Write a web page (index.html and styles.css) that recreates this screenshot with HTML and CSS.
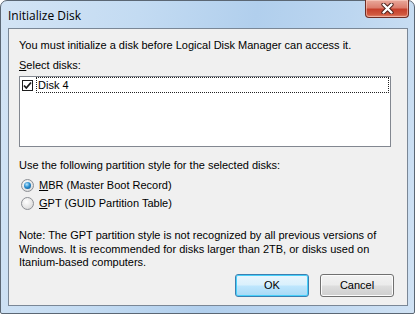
FILE: index.html
```html
<!DOCTYPE html>
<html>
<head>
<meta charset="utf-8">
<link rel="stylesheet" href="styles.css">
</head>
<body>
<div class="window">
  <div class="titlebar">
    <span class="title">Initialize Disk</span>
    <div class="close">
      <svg width="17" height="11" viewBox="0 0 17 11">
        <path d="M4.5 1.5 L12.5 9.5 M12.5 1.5 L4.5 9.5" stroke="#4a1e18" stroke-width="4.2" stroke-linecap="round"/>
        <path d="M4.5 1.5 L12.5 9.5 M12.5 1.5 L4.5 9.5" stroke="#ffffff" stroke-width="2.4" stroke-linecap="round"/>
      </svg>
    </div>
  </div>
  <div class="client">
    <p class="line intro">You must initialize a disk before Logical Disk Manager can access it.</p>
    <p class="line label"><u>S</u>elect disks:</p>
    <div class="listbox">
      <div class="item">
        <span class="check">
          <svg width="9" height="9" viewBox="0 0 9 9"><path d="M1 4.5 L3.3 7 L8 1.5" fill="none" stroke="#1a1a1a" stroke-width="1.8"/></svg>
        </span>
        <span class="item-text">Disk 4</span>
      </div>
    </div>
    <p class="line label2">Use the following partition style for the selected disks:</p>
    <div class="radios">
      <div class="radio-row"><span class="radio on"></span><span><u>M</u>BR (Master Boot Record)</span></div>
      <div class="radio-row"><span class="radio"></span><span><u>G</u>PT (GUID Partition Table)</span></div>
    </div>
    <p class="note">Note: The GPT partition style is not recognized by all previous versions of<br>Windows. It is recommended for disks larger than 2TB, or disks used on<br>Itanium-based computers.</p>
    <div class="buttons">
      <button class="btn default">OK</button>
      <button class="btn">Cancel</button>
    </div>
  </div>
</div>
</body>
</html>
```
FILE: styles.css
```css
html, body {
  margin: 0;
  padding: 0;
  background: #ffffff;
}
.window {
  width: 415px;
  height: 314px;
  box-sizing: border-box;
  border: 1px solid #5b6774;
  border-radius: 7px 7px 2px 2px;
  background: linear-gradient(100deg, #d3e4f5 0%, #c3dbf2 30%, #b1cfed 55%, #bcd6f0 75%, #d0e2f4 100%);
  padding: 0 6px 7px 7px;
  display: flex;
  flex-direction: column;
  font-family: "Liberation Sans", Arial, sans-serif;
  font-size: 11px;
  color: #000;
}
.titlebar {
  height: 27px;
  display: flex;
  justify-content: space-between;
  align-items: flex-start;
}
.title {
  font-family: "Open Sans", "Noto Sans", sans-serif;
  font-size: 12px;
  margin-top: 6px;
  color: #000;
}
.close {
  width: 44px;
  height: 18px;
  margin-top: -1px;
  margin-right: -1px;
  box-sizing: border-box;
  border: 1px solid #6e2d25;
  border-top: none;
  border-radius: 0 0 4px 4px;
  background: linear-gradient(#e9a99c 0%, #dc7e6e 45%, #c6402c 55%, #d0583f 85%, #e48a73 100%);
  box-shadow: inset 0 0 0 1px rgba(255,220,210,0.5);
  display: flex;
  align-items: center;
  justify-content: center;
}
.client {
  flex: 1;
  box-sizing: border-box;
  border: 1px solid #7a8796;
  background: #f0f0f0;
  padding: 10px 16px 0 10px;
  display: flex;
  flex-direction: column;
}
.line {
  margin: 0;
  line-height: 13px;
  height: 13px;
  white-space: nowrap;
}
.label {
  margin-top: 7px;
}
.listbox {
  margin-top: 4px;
  width: 372px;
  height: 71px;
  box-sizing: border-box;
  border: 1px solid #828790;
  background: #fff;
  padding: 0 1px 0 2px;
}
.item {
  height: 16px;
  display: flex;
  align-items: center;
}
.check {
  width: 11px;
  height: 11px;
  box-sizing: border-box;
  border: 1px solid #1e1e1e;
  background: #fff;
  display: flex;
  align-items: center;
  justify-content: center;
  margin-left: 0;
  flex: none;
}
.item-text {
  flex: 1;
  margin-left: 3px;
  height: 16px;
  box-sizing: border-box;
  border: 1px dotted #222;
  padding-left: 1px;
  line-height: 14px;
}
.label2 {
  margin-top: 12px;
}
.radios {
  margin-top: 7px;
  display: flex;
  flex-direction: column;
  gap: 5px;
}
.radio-row {
  height: 13px;
  line-height: 13px;
  display: flex;
  align-items: center;
  gap: 5px;
  padding-left: 2px;
}
.radio {
  width: 13px;
  height: 13px;
  box-sizing: border-box;
  border-radius: 50%;
  border: 1px solid #8c8f94;
  background: radial-gradient(circle at 40% 35%, #ffffff 0%, #e6e6e6 55%, #cfcfcf 100%);
  position: relative;
  flex: none;
}
.radio.on::after {
  content: "";
  position: absolute;
  left: 2px;
  top: 2px;
  width: 7px;
  height: 7px;
  border-radius: 50%;
  background: radial-gradient(circle at 40% 35%, #bfe7fb 0%, #2a8fd0 45%, #0e4c84 100%);
}
.note {
  margin: 19px 0 0 0;
  line-height: 13.5px;
  white-space: nowrap;
}
.buttons {
  margin-top: 4px;
  display: flex;
  justify-content: flex-end;
  gap: 11px;
  padding-right: -3px;
  margin-right: -3px;
}
.btn {
  width: 74px;
  height: 23px;
  box-sizing: border-box;
  font-family: "Liberation Sans", Arial, sans-serif;
  font-size: 11px;
  color: #000;
  border: 1px solid #707070;
  border-radius: 3px;
  background: linear-gradient(#f2f2f2 0%, #ebebeb 48%, #dddddd 52%, #cfcfcf 100%);
  box-shadow: inset 0 0 0 1px #fcfcfc;
  padding: 0;
}
.btn.default {
  border-color: #3c7fb1;
  background: linear-gradient(#eaf6fd 0%, #d9f0fc 48%, #bee6fd 52%, #a7d9f5 100%);
  box-shadow: inset 0 0 0 1px #48d0fa;
}
```
